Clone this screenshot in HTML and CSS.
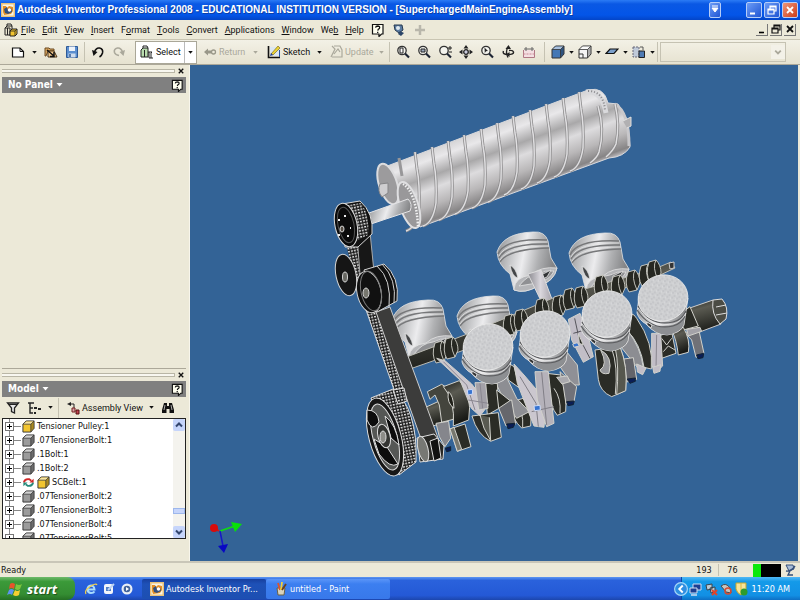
FILE: index.html
```html
<!DOCTYPE html>
<html lang="en">
<head>
	<meta charset="utf-8">
	<title>Autodesk Inventor Professional 2008</title>
	<link rel="stylesheet" href="styles.css">
</head>
<body>

	<!-- shared icons -->
	<svg class="defs" aria-hidden="true">
		<symbol id="cube" viewBox="0 0 14 14">
			<path d="M1 4.500L4.500 1H13V9L9.500 13H1Z" fill="currentColor" stroke="#333" stroke-width="1"/>
			<path d="M1.500 4.500L4.700 1.500H12.500L9.500 4.500Z" fill="#fff" opacity=".55"/>
			<path d="M9.500 4.500L12.500 1.500V9L9.500 12.500Z" fill="#000" opacity=".3"/>
			<path d="M1 4.500H9.500V13M9.500 4.500L13 1" fill="none" stroke="#333" stroke-width=".8"/>
		</symbol>
		<symbol id="lens" viewBox="0 0 14 14">
			<circle cx="6" cy="5.500" r="4.200" fill="#f4f4ee" stroke="#333" stroke-width="1.300"/>
			<path d="M9 8.500L13 12.500" stroke="#1d2433" stroke-width="2.200"/>
		</symbol>
		<symbol id="help" viewBox="0 0 14 14">
			<path d="M1.500 1.500H12V11H10.500L8 13.500V11H1.500Z" fill="#fffff0" stroke="#111" stroke-width="1.200"/>
			<path d="M4.600 4.700Q4.800 3 6.800 3Q8.800 3.100 8.700 4.800Q8.600 5.800 7.200 6.400L6.800 7.600M6.700 8.700V10" fill="none" stroke="#111" stroke-width="1.300"/>
		</symbol>
		<symbol id="assembly" viewBox="0 0 14 14">
			<path d="M1 5L3 3H8V12H1Z" fill="#e9e4cf" stroke="#222"/>
			<path d="M3 3V1H7L8 3M1 5H6V12M3.500 5V12" fill="none" stroke="#222"/>
			<path d="M6 8L8 6H13V11L11 13H6Z" fill="#f3c52e" stroke="#222"/>
			<path d="M6 8H11V13M11 8L13 6" fill="none" stroke="#222" stroke-width=".8"/>
		</symbol>
		<symbol id="app" viewBox="0 0 14 14">
			<path d="M0 0H14V14H0Z" fill="#e9c27a"/>
			<path d="M1.500 1.500H12.500V12.500H1.500Z" fill="#f8f4e6"/>
			<path d="M2 3H5L6 5L8 3L12 4V8L10 11L3 12L2 9Z" fill="#e58f22"/>
			<path d="M3 6L6 4L7 8L10 5L11 9L7 11L4 10Z" fill="#32507e"/>
			<circle cx="8.500" cy="7" r="1.700" fill="#fff"/>
		</symbol>
		<symbol id="arrow" viewBox="0 0 6 4"><path d="M0 0H6L3 3.500Z" fill="currentColor"/></symbol>
		<symbol id="close" viewBox="0 0 8 8"><path d="M1 1L7 7M7 1L1 7" stroke="currentColor" stroke-width="1.800"/></symbol>
		<symbol id="restore" viewBox="0 0 10 10"><path d="M3 5V1H9V6H7M3 2H9M1 4H7V9H1ZM1 5H7" fill="none" stroke="currentColor" stroke-width="1.200"/></symbol>
	</svg>

	<header class="titlebar">
		<svg class="icon"><use href="#app"/></svg>
		<h1>Autodesk Inventor Professional 2008 - EDUCATIONAL INSTITUTION VERSION - [SuperchargedMainEngineAssembly]</h1>
		<button class="cap pin" aria-label="Options"><svg viewBox="0 0 10 14"><path d="M2 3H8M2 5H8L5 9Z" fill="#fff" stroke="#fff"/></svg></button>
		<div class="caps">
			<button class="cap" aria-label="Minimize"><svg viewBox="0 0 14 14"><path d="M3 10.500H8" stroke="#fff" stroke-width="2"/></svg></button>
			<button class="cap restore" aria-label="Restore"><svg viewBox="-2 -2 14 14"><use href="#restore" width="10" height="10"/></svg></button>
			<button class="cap red" aria-label="Close"><svg viewBox="-3 -3 14 14"><use href="#close" width="8" height="8"/></svg></button>
		</div>
	</header>

	<nav class="menubar">
		<svg class="icon"><use href="#assembly"/></svg>
		<button><u>F</u>ile</button>
		<button><u>E</u>dit</button>
		<button><u>V</u>iew</button>
		<button><u>I</u>nsert</button>
		<button>F<u>o</u>rmat</button>
		<button><u>T</u>ools</button>
		<button><u>C</u>onvert</button>
		<button><u>A</u>pplications</button>
		<button><u>W</u>indow</button>
		<button>We<u>b</u></button>
		<button><u>H</u>elp</button>
		<span class="menu-icons">
			<button aria-label="Help topics"><svg class="icon"><use href="#help"/></svg></button>
			<button aria-label="Visual syllabus"><svg class="icon" viewBox="0 0 14 14"><path d="M2 2H10L11 7L7 10L3 7Z" fill="#5a7ba1" stroke="#26394f"/><circle cx="6" cy="5" r="2" fill="#dfe9ef"/><path d="M8 8L12 10L9 13L6 11Z" fill="#2c4668"/></svg></button>
			<button aria-label="Add"><svg class="icon" viewBox="0 0 14 14"><path d="M7 2V12M2 7H12" stroke="#b9b7ab" stroke-width="2.500"/></svg></button>
		</span>
		<span class="doc-caps">
			<button aria-label="Minimize document"><svg viewBox="0 0 10 10"><path d="M2 8.500H7" stroke="#000" stroke-width="1.600"/></svg></button>
			<button aria-label="Restore document"><svg viewBox="0 0 10 10"><use href="#restore"/></svg></button>
			<button aria-label="Close document"><svg viewBox="-1 -1 10 10"><use href="#close" width="8" height="8"/></svg></button>
		</span>
	</nav>

	<div class="toolbar">
		<button class="tool" aria-label="New"><svg class="icon" viewBox="0 0 14 14"><path d="M1.500 3H9L12.500 6.500V12H1.500Z" fill="#fff" stroke="#111" stroke-width="1.200"/><path d="M9 3V6.500H12.500" fill="none" stroke="#111"/></svg></button>
		<button class="drop" aria-label="New options"><svg><use href="#arrow"/></svg></button>
		<button class="tool" aria-label="Open"><svg class="icon" viewBox="0 0 14 14"><path d="M1 3H5L6 4H10V6H4L2 11H1Z" fill="#d9a55e" stroke="#6b4a22"/><path d="M4 6L10 6L13 12H4Z" fill="#f0c78b" stroke="#4a3418"/><path d="M3 5L10 11M10 7V11.500H6" fill="none" stroke="#111" stroke-width="1.500"/></svg></button>
		<button class="tool" aria-label="Save"><svg class="icon" viewBox="0 0 14 14"><path d="M1.500 1.500H12.500V12.500H1.500Z" fill="#5c8fd0" stroke="#2f5a96"/><path d="M4 1.500H10V6H4Z" fill="#eef3fa"/><path d="M3.500 8.500H10.500V12.500H3.500Z" fill="#cfdced"/><path d="M5 9V12" stroke="#2f5a96" stroke-width="1.500"/></svg></button>
		<i class="sep"></i>
		<button class="tool" aria-label="Undo"><svg class="icon" viewBox="0 0 14 14"><path d="M3.500 7Q5 2.500 8.500 3Q12.500 4 11.500 8Q10.800 10.500 8.500 12" fill="none" stroke="#111" stroke-width="1.600"/><path d="M1 5L6.500 7L2.500 11Z" fill="#111"/></svg></button>
		<button class="tool" aria-label="Redo"><svg class="icon" viewBox="0 0 14 14"><path d="M10.500 7Q9 2.500 5.500 3Q1.500 4 2.500 7.500Q3.500 10 7 10.500" fill="none" stroke="#aaa89b" stroke-width="1.600"/><path d="M13 5L7.500 7L11.500 11Z" fill="#aaa89b"/></svg></button>
		<span class="select-box">
			<button class="text-tool"><svg class="icon" viewBox="0 0 14 14"><path d="M1 5L3 3H8V12H1Z" fill="#b9dcae" stroke="#222"/><path d="M3 3V1H7L8 3M4.500 5V12" fill="none" stroke="#222"/><path d="M8 7H12L11 8V13M9 7V13H13" fill="none" stroke="#222"/></svg>Select</button>
			<button class="drop" aria-label="Select options"><svg><use href="#arrow"/></svg></button>
		</span>
		<button class="text-tool return" disabled><svg class="icon" viewBox="0 0 14 14"><path d="M1 7L5 3.500V5.500H8V8.500H5V10.500Z" fill="#999789"/><circle cx="10.500" cy="7" r="2" fill="none" stroke="#999789" stroke-width="1.300"/></svg>Return</button>
		<button class="drop" disabled aria-label="Return options"><svg><use href="#arrow"/></svg></button>
		<button class="text-tool sketch"><svg class="icon" viewBox="0 0 14 14"><path d="M3 2H12V11H3Z" fill="#dce7f2"/><path d="M1.500 1V12.500H13" fill="none" stroke="#111" stroke-width="1.600"/><path d="M4 9L11 1L13 3L6 10Z" fill="#ecd235" stroke="#6c5e10" stroke-width=".6"/><path d="M3 11L4 8L6 10Z" fill="#233e91"/><path d="M12.500 5V12" stroke="#2b55a3"/></svg>Sketch</button>
		<button class="drop" aria-label="Sketch options"><svg><use href="#arrow"/></svg></button>
		<button class="text-tool update" disabled><svg class="icon" viewBox="0 0 14 14"><path d="M3 1L6 4L2 12M5 1H11L13 5V12H3M5 9L9 4L11 7" fill="none" stroke="#aaa89b" stroke-width="1.200"/></svg>Update</button>
		<button class="drop" disabled aria-label="Update options"><svg><use href="#arrow"/></svg></button>
		<i class="sep"></i>
		<span class="views">
			<button class="tool" aria-label="Zoom all"><svg class="icon" viewBox="0 0 14 14"><use href="#lens"/><path d="M4 3H7V8H4Z" fill="#fff" stroke="#222"/></svg></button>
			<button class="tool" aria-label="Zoom window"><svg class="icon" viewBox="0 0 14 14"><use href="#lens"/><path d="M4 4H8V7H4Z" fill="#9aa7ba" stroke="#222"/></svg></button>
			<button class="tool" aria-label="Zoom"><svg class="icon" viewBox="0 0 14 14"><use href="#lens"/><path d="M10 3H14M12 1V5M10.500 7H14" stroke="#222"/></svg></button>
			<button class="tool" aria-label="Pan"><svg class="icon" viewBox="0 0 14 14"><path d="M7 0L9.500 3.500H4.500ZM7 14L9.500 10.500H4.500ZM0 7L3.500 4.500V9.500ZM14 7L10.500 4.500V9.500Z" fill="#222"/><circle cx="7" cy="7" r="2.300" fill="#ccd" stroke="#222" stroke-width="1.300"/></svg></button>
			<button class="tool" aria-label="Zoom selected"><svg class="icon" viewBox="0 0 14 14"><use href="#lens"/><path d="M4.500 2.500L8 6L6 6.200L4.800 8Z" fill="#222"/></svg></button>
			<button class="tool" aria-label="Rotate"><svg class="icon" viewBox="0 0 14 14"><path d="M7 2Q4 7 7 12.500M2.500 6Q1 9.500 7 9.500Q13 9.500 12.500 7Q12 5 8 5.500" fill="none" stroke="#222" stroke-width="1.400"/><path d="M4.500 4L7.500 0L10 4ZM5 9.500L8.500 7V12Z" fill="#222"/></svg></button>
			<button class="tool" aria-label="Look at"><svg class="icon" viewBox="0 0 14 14"><path d="M1.500 5V12.500H12.500V5" fill="#f4dfe2" stroke="#b07884"/><path d="M1.500 9H12.500" stroke="#c98a97" stroke-dasharray="2 1"/><path d="M2 4H12M4 2V6M10 2V6" stroke="#666"/></svg></button>
		</span>
		<i class="sep"></i>
		<span class="display">
			<button class="tool blue" aria-label="Shaded display"><svg class="icon"><use href="#cube"/></svg></button>
			<button class="drop" aria-label="Display options"><svg><use href="#arrow"/></svg></button>
			<button class="tool white" aria-label="Camera"><svg class="icon" viewBox="0 0 14 14"><use href="#cube"/><path d="M1 9H5V13" fill="none" stroke="#333"/></svg></button>
			<button class="drop" aria-label="Camera options"><svg><use href="#arrow"/></svg></button>
			<button class="tool" aria-label="Shadow"><svg class="icon" viewBox="0 0 14 14"><path d="M1 8.500L5 4H13L9 8.500Z" fill="#7b9fca" stroke="#111" stroke-width="1.200"/></svg></button>
			<button class="drop" aria-label="Shadow options"><svg><use href="#arrow"/></svg></button>
			<button class="tool" aria-label="Component opacity"><svg class="icon" viewBox="0 0 14 14"><path d="M1 2H7V12H1Z" fill="#bfc9d8" stroke="#667" stroke-dasharray="2 1"/><path d="M7 6H12.500V12.500H7Z" fill="#4f7bb3" stroke="#222"/><path d="M8 2H11V5" fill="none" stroke="#555"/></svg></button>
			<button class="drop" aria-label="Opacity options"><svg><use href="#arrow"/></svg></button>
		</span>
		<i class="sep"></i>
		<span class="style-pick"><select disabled aria-label="Style"><option></option></select><svg viewBox="0 0 10 8"><path d="M3 3L5 5L7 3" fill="none" stroke="#aaa89b" stroke-width="1.300"/></svg></span>
	</div>

	<main class="workspace">
		<aside class="sidebar">
			<section class="panel panel-top">
				<div class="grip"><i></i><button aria-label="Close panel"><svg><use href="#close"/></svg></button></div>
				<h2><button>No Panel <svg class="tri"><use href="#arrow"/></svg></button><button aria-label="Panel help"><svg class="icon"><use href="#help"/></svg></button></h2>
			</section>
			<section class="panel">
				<div class="grip"><i></i><button aria-label="Close browser"><svg><use href="#close"/></svg></button></div>
				<h2><button>Model <svg class="tri"><use href="#arrow"/></svg></button><button aria-label="Model help"><svg class="icon"><use href="#help"/></svg></button></h2>
				<div class="model-tools">
					<button class="tool" aria-label="Filter"><svg class="icon" viewBox="0 0 14 14"><path d="M1.500 2H12.500L8.500 7V12L5.500 10.500V7Z" fill="#e8e8e8" stroke="#222" stroke-width="1.300"/><path d="M3 3.500H11" stroke="#222"/></svg></button>
					<button class="tool" aria-label="Tree display"><svg class="icon" viewBox="0 0 14 14"><path d="M1 2H7M3 2V12H6M3 7H6" fill="none" stroke="#222" stroke-width="1.400"/><path d="M7 7H10M7 12H9M11 8H14" stroke="#222" stroke-width="2"/></svg></button>
					<button class="drop" aria-label="Tree options"><svg><use href="#arrow"/></svg></button>
					<i class="sep"></i>
					<button class="text-tool view"><svg class="icon" viewBox="0 0 14 14"><path d="M1 3L5 1V5Z" fill="#222"/><path d="M5 3H8V7" fill="none" stroke="#222"/><path d="M6 7H9V11H6Z" fill="#d9a0a8" stroke="#722"/><path d="M10 9H13V13H10Z" fill="#bf4351" stroke="#511"/></svg>Assembly View</button>
					<button class="drop" aria-label="View options"><svg><use href="#arrow"/></svg></button>
					<button class="tool" aria-label="Find"><svg class="icon" viewBox="0 0 14 14"><path d="M3 2H6V5H8V2H11L13 9V12H8.500V8H5.500V12H1V9Z" fill="#111"/><path d="M4 4L3 9M10 4L11 9" stroke="#aaa"/></svg></button>
				</div>
				<div class="tree-box">
					<ul class="tree">
						<li><button class="plus" aria-label="Expand"></button><svg class="part yellow"><use href="#cube"/></svg>Tensioner Pulley:1</li>
						<li><button class="plus" aria-label="Expand"></button><svg class="part"><use href="#cube"/></svg>.07TensionerBolt:1</li>
						<li><button class="plus" aria-label="Expand"></button><svg class="part"><use href="#cube"/></svg>.1Bolt:1</li>
						<li><button class="plus" aria-label="Expand"></button><svg class="part"><use href="#cube"/></svg>.1Bolt:2</li>
						<li><button class="plus" aria-label="Expand"></button><svg class="part" viewBox="0 0 14 14"><path d="M2 7Q3 2.500 8 3.500L10 5" fill="none" stroke="#d02828" stroke-width="2"/><path d="M12 7Q11 11.500 6 10.500L4 9" fill="none" stroke="#268a7c" stroke-width="2"/><path d="M12.500 3V7H8Z" fill="#d02828"/><path d="M1.500 11V7H6Z" fill="#268a7c"/></svg><svg class="part yellow"><use href="#cube"/></svg>SCBelt:1</li>
						<li><button class="plus" aria-label="Expand"></button><svg class="part"><use href="#cube"/></svg>.07TensionerBolt:2</li>
						<li><button class="plus" aria-label="Expand"></button><svg class="part"><use href="#cube"/></svg>.07TensionerBolt:3</li>
						<li><button class="plus" aria-label="Expand"></button><svg class="part"><use href="#cube"/></svg>.07TensionerBolt:4</li>
						<li><button class="plus" aria-label="Expand"></button><svg class="part"><use href="#cube"/></svg>.07TensionerBolt:5</li>
					</ul>
					<div class="scroll">
						<button aria-label="Scroll up"><svg viewBox="0 0 10 10"><path d="M2 6.500L5 3.500L8 6.500" fill="none" stroke="#33466e" stroke-width="2"/></svg></button>
						<i class="thumb"></i>
						<button aria-label="Scroll down"><svg viewBox="0 0 10 10"><path d="M2 3.500L5 6.500L8 3.500" fill="none" stroke="#33466e" stroke-width="2"/></svg></button>
					</div>
				</div>
			</section>
		</aside>

		<div class="viewport">
			<svg viewBox="190 65 608 496" role="img" aria-label="Supercharged main engine assembly">
				<defs>
					<linearGradient id="rotor" gradientUnits="userSpaceOnUse" x1="482" y1="124" x2="512" y2="205">
						<stop offset="0" stop-color="#c9c8c9"/><stop offset=".18" stop-color="#e9e8ea"/><stop offset=".36" stop-color="#a9a8a9"/><stop offset=".5" stop-color="#dddcde"/><stop offset=".68" stop-color="#b9b7b8"/><stop offset=".84" stop-color="#868485"/><stop offset=".93" stop-color="#e4e0e4"/><stop offset="1" stop-color="#aaa"/>
					</linearGradient>
					<linearGradient id="steel" x1="0" x2="1" y1="0" y2=".2">
						<stop offset="0" stop-color="#8c8d8f"/><stop offset=".3" stop-color="#c6c7c9"/><stop offset=".5" stop-color="#ececee"/><stop offset=".75" stop-color="#b0b1b3"/><stop offset="1" stop-color="#848587"/>
					</linearGradient>
					<linearGradient id="iron" x1="0" x2=".3" y1="0" y2="1">
						<stop offset="0" stop-color="#1b1c18"/><stop offset=".35" stop-color="#5b5b52"/><stop offset="1" stop-color="#191a16"/>
					</linearGradient>
					<linearGradient id="rod" x1="0" x2="1" y1="0" y2="0">
						<stop offset="0" stop-color="#8b8a90"/><stop offset=".5" stop-color="#dad7dd"/><stop offset="1" stop-color="#a19da5"/>
					</linearGradient>
					<pattern id="teeth" width="3" height="3" patternUnits="userSpaceOnUse" patternTransform="rotate(-12)">
						<path d="M0 0H3V3H0Z" fill="#1b1b1b"/><path d="M0 0H2V1.500H0Z" fill="#ddd"/>
					</pattern>
					<pattern id="speck" width="5" height="5" patternUnits="userSpaceOnUse" patternTransform="rotate(25)">
						<path d="M0 0H5V5H0Z" fill="#cfd0d2"/><path d="M0 1H2M3 3H5" stroke="#bcbdc0"/><path d="M2 4H3" stroke="#dfe0e2"/>
					</pattern>
					<path id="fin" d="M0 0L2 17Q5 32 4 56Q1 76-9 79" fill="none"/>
					<g id="blade"><use href="#fin" stroke="#8c8b8c" stroke-width="3"/><use href="#fin" stroke="#dfdee0" stroke-width="1.500"/></g>

					<!-- piston seen from the side, rings on top -->
					<g id="piston-side" stroke="#e4e4e4" stroke-width=".8">
						<path d="M-30-9Q-24-28 6-29Q18-30 21-20L24-3L30 7Q27 21 11 25Q-2 33-13 29L-17 13Q-29 4-30-9Z" fill="url(#steel)"/>
						<path d="M-29-7Q-22-23 20-21M-28-3Q-20-18 21-17M-27 1Q-19-12 22-13" fill="none" stroke="#77787a" stroke-width="1.400"/>
						<path d="M-28-5Q-21-20 20-19M-27-1Q-19-15 22-15" fill="none"/>
						<path d="M-17 4Q-11 7-9 17Q-15 16-17 4Z" fill="#444648"/>
						<path d="M-13 28Q-12 16 4 14Q14 5 30 7Q27 21 11 25Q-2 33-13 29Z" fill="#b5b6b9"/>
						<path d="M-8 25Q0 14 11 13Q18 9 27 10Q23 19 10 22Z" fill="#8f9093"/>
						<path d="M14 14L24 9L20 16L13 19Z" fill="#333537"/>
					</g>
					<!-- piston seen from above, crown facing the viewer -->
					<g id="piston-top" stroke="#ececec" stroke-width=".8">
						<path d="M-24-2L-26 15Q-24 22-17 26Q-9 36 4 37Q18 35 21 27L25 0Z" fill="url(#steel)"/>
						<path d="M-17 25Q-4 31 10 27Q19 24 22 17L20 27Q14 36 4 37Q-9 36-17 25Z" fill="#8d8f92" stroke="none"/>
						<path d="M-25 8Q-13 29 10 24Q19 22 23 13M-26 12Q-12 33 10 28Q18 26 22 18" fill="none" stroke="#5b5c5f" stroke-width="1.200"/>
						<path d="M-25 10Q-12 31 10 26Q18 24 23 15" fill="none"/>
						<ellipse cx="0" cy="0" rx="25" ry="23" transform="rotate(-15)" fill="url(#speck)"/>
						<path d="M-16 24L-11 27L-12 30L-16 27Z" fill="#333"/>
					</g>
					<!-- camshaft lobe -->
					<g id="lobe" stroke="#d0d0c8" stroke-width=".9">
						<path d="M-4-9L3-11Q8-6 8 2L5 9L-3 11Q-8 3-4-9Z" fill="#272822"/>
						<path d="M3-11Q-1-4 5 9" fill="none"/>
					</g>
				</defs>

				<!-- supercharger rotors -->
				<g class="rotors">
					<path d="M382 168L588 90Q604 86 608 103L618 104L628 121L630 147Q624 157 609 158L420 227L397 205Z" fill="url(#rotor)" stroke="#d9d9dc"/>
					<path d="M586 92Q602 90 606 113" fill="none" stroke="#d9d9dc" stroke-width="5"/>
					<path d="M588 91Q604 91 605 111" fill="none" stroke="#858589" stroke-dasharray="1 2" stroke-width="2"/>
					<path d="M615 104Q629 112 629 146" fill="none" stroke="#c9c8cb" stroke-width="3"/>
					<path d="M623 121L631 117V126L627 128" fill="#b1b0b2" stroke="#e0e0e0"/>
					<use href="#blade" x="415" y="152"/>
					<use href="#blade" x="432" y="147"/>
					<use href="#blade" x="448" y="141"/>
					<use href="#blade" x="464" y="135"/>
					<use href="#blade" x="481" y="129"/>
					<use href="#blade" x="497" y="123"/>
					<use href="#blade" x="513" y="116"/>
					<use href="#blade" x="530" y="110"/>
					<use href="#blade" x="546" y="104"/>
					<use href="#blade" x="563" y="98"/>
					<use href="#blade" x="579" y="92"/>
					<path d="M598 106Q605 130 599 152Q597 158 590 163M615 104Q620 125 616 144Q613 151 606 157" fill="none" stroke="#8c8b8c" stroke-width="3"/>
					<path d="M598 106Q605 130 599 152Q597 158 590 163M615 104Q620 125 616 144Q613 151 606 157" fill="none" stroke="#dfdee0" stroke-width="1.500"/>
					<path d="M399 158L402 176" stroke="#989799" stroke-width="3"/>
					<ellipse cx="388" cy="184" rx="9" ry="21" transform="rotate(-18 388 184)" fill="#9c9b9d" stroke="#dcdcde" stroke-width="2"/>
					<path d="M380 184L388 183V193L382 197Q377 191 380 184Z" fill="#cfced0" stroke="#858587"/>
					<ellipse cx="409" cy="205" rx="9" ry="24" transform="rotate(-18 409 205)" fill="#99989a" stroke="#dfdfe1" stroke-width="2"/>
					<path d="M403 184Q416 192 418 226" fill="none" stroke="#f1f1f1" stroke-width="2.500" stroke-dasharray="1.500 1.500"/>
					<path d="M369 213L408 199Q413 204 410 211L371 224Z" fill="url(#steel)" stroke="#e4e4e6"/>
				</g>

				<!-- rear pistons and camshaft -->
				<use href="#piston-side" x="422" y="329"/>
				<use href="#piston-side" x="487" y="325"/>
				<use href="#piston-side" x="527" y="261"/>
				<use href="#piston-side" x="599" y="262"/>
				<path d="M528 274L541 270L553 302L543 305Z" fill="url(#rod)" stroke="#ddd"/>
				<path d="M404 358L470 333L553 298L652 270L671 262L675 268L656 277L556 312L470 348L407 370Z" fill="url(#iron)" stroke="#b9b9b2"/>
				<use href="#lobe" x="439" y="352"/><use href="#lobe" x="450" y="348"/>
				<use href="#lobe" x="509" y="325"/><use href="#lobe" x="520" y="320"/>
				<use href="#lobe" x="541" y="309"/><use href="#lobe" x="558" y="306"/>
				<use href="#lobe" x="569" y="299"/><use href="#lobe" x="580" y="297"/>
				<use href="#lobe" x="600" y="286"/><use href="#lobe" x="617" y="286"/>
				<use href="#lobe" x="632" y="281"/><use href="#lobe" x="645" y="275"/><use href="#lobe" x="653" y="271"/>
				<path d="M669 263L674 262V268L670 269Z" fill="#333" stroke="#ccc"/>

				<!-- crankshaft, rear half -->
				<path d="M681 311L713 300L721 324L689 336Z" fill="url(#iron)" stroke="#ccc"/>
				<path d="M713 300L722 299Q729 307 726 319L720 324Q711 314 713 300Z" fill="#4b4c44" stroke="#ddd"/>
				<path d="M716 307L726 305M716 315L727 313" stroke="#ddd"/>
				<g transform="translate(540 290) scale(.3333)" stroke="#d2d2cc" stroke-width="3" fill="#2b2c26">
					<path d="M415 75L450 50L475 108L430 120Z"/>
					<path d="M435 128L475 113L492 190L468 202L455 150Z" fill="#707177"/>
					<path d="M440 118L480 112L485 124L445 138Z" fill="#a3a2a8"/>
					<path d="M395 120L430 112Q452 150 445 187L415 195Q410 150 395 120Z" fill="url(#iron)"/>
					<path d="M355 138L395 125L408 190L365 205Z"/>
					<path d="M365 145L380 165L395 145M370 185L385 168L405 180" fill="none"/>
					<path d="M335 130L362 130L368 228L348 247L335 225Z" fill="#c2bec7"/>
					<path d="M350 135L348 240" stroke="#8a8790"/>
					<path d="M250 75Q275 60 290 85Q342 160 334 237L312 232Q302 160 260 120Z"/>
					<path d="M230 155L262 120Q304 175 310 234L292 232Z" fill="#8c8d92"/>
					<path d="M290 222L318 234L308 254L292 246ZM338 232L362 224L360 244L342 250Z" fill="#c2bec7"/>
					<path d="M245 208L280 203L290 268L262 276Z" fill="#63646a"/>
					<path d="M165 180L240 170Q264 230 257 302L215 320Q180 305 175 268Z"/>
					<path d="M215 175Q235 230 226 312" fill="none"/>
					<path d="M182 180Q220 200 207 250Q185 255 180 240Q205 225 182 180Z" fill="#96979a"/>
					<path d="M226 175L240 170Q264 230 257 302L230 314Q238 230 226 175Z" fill="#56574e"/>
					<path d="M85 88L120 70L145 140L160 200L130 217L95 150Z" fill="#c2bec7"/>
					<path d="M104 85L116 140L150 205M100 130L135 120" fill="none" stroke="#55545a"/>
					<path d="M115 130L130 165L118 160Z"/>
					<path d="M80 185L112 225L118 285L98 285L60 230Z" fill="#8f9096"/>
					<path d="M262 267L286 264L286 274L270 280ZM470 195L491 190L489 203L474 206Z" fill="#0a1e56" stroke="#123"/>
					<path d="M98 162L112 158L118 168L102 172Z" fill="#3773d0"/>
				</g>

				<!-- crankshaft, front half -->
				<g transform="translate(400 340) scale(.3333)" stroke="#d2d2cc" stroke-width="3" fill="#2b2c26">
					<path d="M440 100L482 105Q502 165 497 215L472 226Q450 200 448 150Z"/>
					<path d="M462 145Q484 175 480 220" fill="none"/>
					<path d="M480 95L530 140L522 186L498 192L490 140Z" fill="#717279"/>
					<path d="M470 112L502 108L510 125L486 132Z" fill="#aaa9ae"/>
					<path d="M318 65L342 80L360 145L325 120Z"/>
					<path d="M318 190L370 175Q398 215 392 258L365 264Q338 240 330 200Z"/>
					<path d="M346 184Q372 215 368 262" fill="none"/>
					<path d="M285 125L318 108L350 175L388 215L350 235L315 185Z" fill="#8d8e93"/>
					<path d="M290 190L335 180L347 252L318 258Z" fill="#66676c"/>
					<path d="M255 130L292 130L297 205L262 225Z"/>
					<path d="M216 228L295 218L304 292L272 304Q232 285 216 228Z"/>
					<path d="M240 225Q248 265 272 302L268 232" fill="#595a51"/>
					<path d="M290 150L330 182L296 205Z"/>
					<path d="M70 205L125 180L145 240L90 262Z" fill="url(#iron)"/>
					<path d="M82 155L125 133L152 150L166 200L160 238L125 247L118 195L105 165L90 178Z" fill="#44453d"/>
					<path d="M130 140L178 122Q218 160 206 240L160 258Q166 180 130 140Z" fill="url(#iron)"/>
					<path d="M145 155Q160 165 162 205Q140 190 145 155Z" fill="#202019"/>
					<path d="M108 250L146 244L152 295L135 320L118 290Z" fill="#85868c"/>
					<path d="M150 267L195 252L213 320L172 334Z"/>
					<path d="M150 267L162 262L185 328L172 334Z" fill="#77786f"/>
					<path d="M110 55L135 62L215 132L265 195L240 228L214 205L180 120Z" fill="#cbc7cf"/>
					<path d="M225 128L257 128L264 205L236 210Z" fill="#a3a1a8"/>
					<path d="M130 65L200 135L225 210M240 130L248 205M205 180L265 190" fill="none" stroke="#8a8790"/>
					<path d="M342 72L372 105L440 185L432 262L402 258L352 130Z" fill="#cbc7cf"/>
					<path d="M405 95L445 95L462 250L440 260L412 180Z" fill="#b5b2ba"/>
					<path d="M360 110L408 190L415 260M425 97L440 255M395 215L462 200" fill="none" stroke="#817e87"/>
					<path d="M320 252L345 250L340 262L324 266ZM500 185L523 183L520 194L504 197ZM136 325L152 320V332L140 335Z" fill="#0a1e56" stroke="#123"/>
					<path d="M202 150L217 148L218 162L204 165ZM402 198L420 196L421 210L404 212Z" fill="#3773d0" stroke="#cfdcf6"/>
				</g>

				<!-- front pistons -->
				<use href="#piston-top" x="488" y="347"/>
				<use href="#piston-top" x="545" y="334"/>
				<use href="#piston-top" x="607" y="314"/>
				<use href="#piston-top" x="663" y="298"/>

				<!-- belt drive -->
				<path d="M365 307L377 303L408 397L398 401Z" fill="url(#teeth)" stroke="#ddd"/>
				<path d="M376 312L390 307L441 446L427 456Z" fill="#3c3c3b" stroke="#ccc"/>
				<path d="M347 248L361 240L372 281L356 285Z" fill="url(#teeth)"/>
				<path d="M357 236L370 232L374 272L360 274Z" fill="#171717" stroke="#aaa"/>
				<g stroke="#d8d8d8">
					<path d="M342 204L360 201Q374 213 372 234L358 247L345 247Z" fill="#111"/>
					<path d="M348 205L361 203Q370 215 368 235L356 241Z" fill="url(#teeth)" stroke="none"/>
					<ellipse cx="346" cy="225" rx="11" ry="22" transform="rotate(-12 346 225)" fill="#0b0b0b"/>
					<ellipse cx="346" cy="225" rx="8" ry="18" transform="rotate(-12 346 225)" fill="none" stroke="#555"/>
					<ellipse cx="342" cy="229" rx="2" ry="3" fill="#554d43"/>
				</g>
				<path d="M338 220H340M344 216H346M347 236H349M338 235H340M350 228H351" stroke="#eee" stroke-width="2"/>
				<g stroke="#d4d4d4">
					<ellipse cx="346" cy="275" rx="10" ry="21" transform="rotate(-12 346 275)" fill="#151515"/>
					<ellipse cx="345" cy="277" rx="2.500" ry="5" fill="#686862"/>
					<path d="M364 270L384 264Q400 277 397 301L377 312Z" fill="#111"/>
					<path d="M377 266Q392 279 389 307M382 264Q397 279 394 303" fill="none"/>
					<ellipse cx="369" cy="292" rx="12" ry="21" transform="rotate(-12 369 292)" fill="#111"/>
					<ellipse cx="371" cy="291" rx="10" ry="20" transform="rotate(-12 371 291)" fill="none" stroke="#777"/>
					<ellipse cx="366" cy="293" rx="3" ry="5" fill="#77776f"/>
				</g>
				<g stroke="#dedede">
					<path d="M371 398L393 389Q418 409 416 462L399 475Z" fill="url(#teeth)"/>
					<path d="M393 390L404 388L407 401L398 404Z" fill="url(#teeth)"/>
					<ellipse cx="385" cy="437" rx="16" ry="40" transform="rotate(-15 385 437)" fill="#171717"/>
					<ellipse cx="385" cy="437" rx="12" ry="34" transform="rotate(-15 385 437)" fill="#555755"/>
					<path d="M367 410Q378 410 379 422Q372 433 367 420ZM374 439L387 447L398 464Q390 469 379 454ZM385 416Q396 424 399 445L391 438Z" fill="#0c0c0c"/>
					<ellipse cx="384" cy="436" rx="6" ry="12" transform="rotate(-15 384 436)" fill="#343533"/>
					<ellipse cx="383" cy="437" rx="3" ry="6" fill="#8c8c88"/>
					<path d="M417 438L434 434L444 446L443 459L420 462Z" fill="#272724"/>
					<path d="M430 441L438 438L441 458L434 461Z" fill="#111"/>
					<ellipse cx="423" cy="449" rx="5" ry="13" transform="rotate(-14 423 449)" fill="#777874"/>
				</g>

				<!-- axis triad -->
				<path d="M220 531L235 526" stroke="#0fdd0f" stroke-width="1.500"/><path d="M231 522L242 524L235 532Z" fill="#08e208"/>
				<path d="M220 531L223 546" stroke="#1717c8" stroke-width="1.500"/><path d="M218 546L228 544L224 553Z" fill="#0808c4"/>
				<path d="M219 531L214 528" stroke="#d81717" stroke-width="2"/><circle cx="214" cy="528" r="4" fill="#d80c0c"/>
			</svg>
		</div>
	</main>

	<footer class="status">
		<span class="ready">Ready</span><span class="count">193</span><span class="count second">76</span>
		<i class="memory"></i>
		<svg class="icon" viewBox="0 0 14 14"><path d="M3 2H10L11 6L6 8Z" fill="#a8bdd8" stroke="#35507a"/><path d="M12 3Q8 9 3 8M7 8L5 12H10" fill="none" stroke="#35507a" stroke-width="1.400"/></svg>
	</footer>

	<div class="taskbar">
		<button class="start"><svg viewBox="0 0 16 16"><path d="M3 3Q5 1 8 3L7 8Q4 6 2 8Z" fill="#e9542b"/><path d="M9 3Q12 5 15 3L13 8Q11 10 8 8Z" fill="#7fc63d"/><path d="M2 9Q4 7 7 9L5 14Q3 12 0 14Z" fill="#5d93f0"/><path d="M8 9Q10 11 13 9L12 14Q9 16 6 14Z" fill="#f6cf32"/></svg>start</button>
		<div class="quick">
			<button aria-label="Internet Explorer"><svg class="icon" viewBox="0 0 14 14"><path d="M3.500 7.500H10.500Q10 3.500 7 3.500Q3.500 4 3.500 7.500Q4 11 7 11Q9.500 11 10.500 9.500" fill="none" stroke="#a8dcff" stroke-width="2"/><path d="M2 12Q0 8 7 4Q12 1 13 3" fill="none" stroke="#f4cf49" stroke-width="1.200"/></svg></button>
			<button aria-label="Show desktop"><svg class="icon" viewBox="0 0 14 14"><rect x="2" y="2" width="9" height="10" rx="2" fill="#f2f5fb"/><path d="M4 5H9V9H4Z" fill="#527fc7"/><path d="M6 8L12 2" stroke="#bbd2f2" stroke-width="2"/></svg></button>
			<button aria-label="Media player"><svg class="icon" viewBox="0 0 14 14"><circle cx="7" cy="7" r="5.500" fill="#e8eef6"/><circle cx="7" cy="7" r="3.300" fill="#42639b"/><path d="M6 5L9 7L6 9Z" fill="#fff"/></svg></button>
		</div>
		<button class="task active"><svg class="icon"><use href="#app"/></svg>Autodesk Inventor Pr...</button>
		<button class="task"><svg class="icon" viewBox="0 0 14 14"><path d="M3 6H11L10 13H4Z" fill="#d8d2bd" stroke="#6a6045"/><path d="M4 1L6 8" stroke="#e0542a" stroke-width="1.800"/><path d="M8 0L7 8" stroke="#f2cf3b" stroke-width="1.800"/><path d="M12 2L8 8" stroke="#6b3f1b" stroke-width="1.800"/></svg>untitled - Paint</button>
		<div class="tray">
			<button class="more" aria-label="Show hidden icons"><svg viewBox="0 0 12 12"><circle cx="6" cy="6" r="5.500" fill="#2f8fe2" stroke="#a5d6f7"/><path d="M7.500 3L4.500 6L7.500 9" fill="none" stroke="#fff" stroke-width="1.600"/></svg></button>
			<svg class="icon" viewBox="0 0 14 14"><path d="M4 2H12V8H4Z" fill="#1c3f92" stroke="#d2dcef"/><path d="M1 6H8V11H1Z" fill="#1c3f92" stroke="#d2dcef"/><path d="M2 13H8" stroke="#d2dcef" stroke-width="1.500"/></svg>
			<svg class="icon" viewBox="0 0 14 14"><path d="M2 3L8 2V7L3 8ZM6 6L11 5V10L7 11Z" fill="#bccbd5" stroke="#39444d"/><path d="M8 8L13 13M13 8L8 13" stroke="#e0432a" stroke-width="2"/></svg>
			<svg class="icon" viewBox="0 0 14 14"><path d="M2 4Q7 0 11 6L12 11L7 10Z" fill="#c8c4bd" stroke="#4b4b4b"/><circle cx="9" cy="9" r="3" fill="none" stroke="#d54b31" stroke-width="1.500"/></svg>
			<svg class="icon" viewBox="0 0 14 14"><path d="M2 1H12V7Q11 11 7 13Q3 11 2 7Z" fill="#f5e49a" stroke="#c3a62d"/><path d="M7 1V12" stroke="#d8b93c"/><circle cx="10" cy="10" r="3.500" fill="#2d9c2d"/></svg>
			<time>11:20 AM</time>
		</div>
	</div>

</body>
</html>
```

FILE: styles.css
```css
* {
	box-sizing: border-box;
}
body {
	margin: 0;
	height: 100vh;
	display: flex;
	flex-direction: column;
	overflow: hidden;
	background: #ece9d8;
	color: #111;
	font-family: "DejaVu Sans Condensed", "DejaVu Sans", sans-serif;
	font-size: 9px;
	line-height: 12px;
}
button {
	display: flex;
	align-items: center;
	flex: none;
	margin: 0;
	padding: 0;
	border: 0;
	background: none;
	color: inherit;
	font: inherit;
	white-space: nowrap;
}
button:disabled {
	color: #aaa89b;
}
svg {
	display: block;
	flex: none;
}
.defs {
	position: absolute;
	width: 0;
	height: 0;
}
.icon {
	width: 14px;
	height: 14px;
}

/* title bar */
.titlebar {
	display: flex;
	align-items: center;
	height: 20px;
	padding: 0 2px 0 1px;
	gap: 2px;
	flex: none;
	color: #fff;
	background: linear-gradient(#2b7bf5, #0a58e4 20%, #0355e8 75%, #0345c8);
}
.titlebar h1 {
	flex: 1;
	min-width: 0;
	margin: 0;
	overflow: hidden;
	white-space: nowrap;
	font-family: "Liberation Sans", Arial, sans-serif;
	font-size: 10px;
	font-weight: bold;
	text-shadow: 1px 1px #0a3fa8;
}
.cap {
	width: 16px;
	height: 16px;
	justify-content: center;
	border: 1px solid #b5cdf8;
	border-radius: 2px;
	background: linear-gradient(135deg, #6c9cf6, #2056d4);
}
.cap svg {
	width: 14px;
	height: 14px;
}
.pin {
	width: 12px;
	margin-right: 23px;
}
.pin svg {
	width: 10px;
}
.caps {
	display: flex;
	gap: 2px;
}
.red {
	background: linear-gradient(135deg, #ef9579, #cc3c18);
}

/* menu */
.menubar,
.toolbar,
.model-tools {
	font-family: Roboto, "Liberation Sans", sans-serif;
}
.menubar {
	display: flex;
	align-items: center;
	gap: 7px;
	height: 20px;
	flex: none;
	padding: 0 4px;
	border-bottom: 1px solid #c9c5b2;
}
.menubar > .icon {
	margin-right: -4px;
}
.menu-icons {
	display: flex;
	gap: 7px;
}
.doc-caps {
	display: flex;
	margin-left: auto;
	gap: 2px;
}
.doc-caps button {
	width: 12px;
	height: 12px;
	justify-content: center;
	border-right: 1px solid #777;
	border-bottom: 1px solid #777;
}
.doc-caps svg {
	width: 10px;
	height: 10px;
}

/* toolbar */
.toolbar {
	display: flex;
	align-items: center;
	height: 25px;
	flex: none;
	padding: 0 4px 0 7px;
	border-bottom: 1px solid #aca899;
	background: linear-gradient(#f3f1e6, #e6e2d0);
}
.tool {
	width: 21px;
	height: 20px;
	justify-content: center;
}
.blue {
	color: #4377b5;
}
.white {
	color: #f4f4f4;
}
.drop {
	width: 12px;
	height: 20px;
	justify-content: center;
}
.drop svg {
	width: 5px;
	height: 3px;
}
.sep {
	width: 1px;
	height: 20px;
	margin: 0 2px;
	flex: none;
	background: #c5c2b2;
}
.views {
	display: flex;
	flex: none;
	margin-right: 3px;
}
.display {
	display: flex;
	flex: none;
}
.display .drop {
	width: 6px;
}
.text-tool {
	gap: 2px;
	height: 20px;
}
.select-box {
	display: flex;
	align-items: center;
	width: 62px;
	height: 23px;
	margin-left: 6px;
	padding-left: 4px;
	flex: none;
	border: 1px solid #aaa798;
	background: #fff;
}
.select-box .text-tool {
	flex: 1;
}
.select-box .drop {
	height: 21px;
	border-left: 1px solid #bbb;
}
.return,
.sketch,
.update {
	width: 46px;
	margin-left: 6px;
}
.update {
	margin-left: 4px;
}
.style-pick {
	display: flex;
	align-items: center;
	flex: 1;
	height: 20px;
	margin-right: 10px;
	border: 1px solid #c5c2b2;
}
.style-pick select {
	flex: 1;
	height: 18px;
	min-width: 0;
	border: 0;
	appearance: none;
	background: transparent;
}
.style-pick svg {
	width: 14px;
	height: 14px;
	background: #f3f1e8;
}

/* side panels */
.workspace {
	display: flex;
	flex: 1;
	min-height: 0;
}
.sidebar {
	display: flex;
	flex-direction: column;
	width: 190px;
	flex: none;
	padding: 0 3px 0 2px;
	border-right: 1px solid #f8f6ec;
}
.panel-top {
	flex: 1;
	border-bottom: 1px solid #aca899;
}
.grip {
	display: flex;
	align-items: center;
	gap: 3px;
	height: 12px;
}
.grip i {
	flex: 1;
	height: 4px;
	border: 1px solid #b9b6a6;
	border-left: 0;
	background: #f8f7f0;
}
.grip svg {
	width: 6px;
	height: 6px;
	margin-right: 2px;
}
.panel h2 {
	display: flex;
	align-items: center;
	justify-content: space-between;
	height: 16px;
	margin: 0;
	padding: 0 2px 0 6px;
	background: #808080;
	color: #fff;
	font-size: 10px;
	font-weight: bold;
}
.panel h2 .icon {
	width: 13px;
	height: 13px;
}
.tri {
	width: 7px;
	height: 4px;
	margin-left: 3px;
}
.model-tools {
	display: flex;
	align-items: center;
	height: 21px;
}
.view {
	margin: 0 2px 0 5px;
}
.tree-box {
	display: flex;
	height: 121px;
	margin-bottom: 22px;
	border: 1px solid #222;
	background: #fff;
}
.tree {
	flex: 1;
	margin: 0;
	padding: 0 0 0 2px;
	overflow: hidden;
	list-style: none;
}
.tree li {
	display: flex;
	align-items: center;
	gap: 2px;
	height: 14px;
	white-space: nowrap;
	/* trunk line behind the expanders */
	background: linear-gradient(#888, #888) 4px 0 / 1px 14px no-repeat, linear-gradient(#888, #888) 4px 7px / 12px 1px no-repeat;
}
.plus {
	width: 9px;
	height: 9px;
	margin-right: 6px;
	border: 1px solid #777;
	background: linear-gradient(#000, #000) center / 5px 1px no-repeat, linear-gradient(#000, #000) center / 1px 5px no-repeat, #fff;
}
.part {
	width: 13px;
	height: 13px;
	color: #9b9b9b;
}
.yellow {
	color: #f2c530;
}
.scroll {
	display: flex;
	flex-direction: column;
	width: 12px;
	background: #f4f3ee;
}
.scroll button {
	width: 12px;
	height: 12px;
	justify-content: center;
	border-radius: 2px;
	background: #c6d5fb;
}
.scroll svg {
	width: 10px;
	height: 10px;
}
.thumb {
	height: 6px;
	margin: auto 0 12px;
	border: 1px solid #9db7ec;
	background: #c6d5fb;
}
.viewport {
	flex: 1;
	min-width: 0;
	margin-right: 2px;
	background: #336396;
}
.viewport svg {
	width: 100%;
	height: 100%;
}

/* status */
.status {
	display: flex;
	align-items: center;
	height: 16px;
	flex: none;
	padding: 0 3px 0 1px;
	border-top: 2px solid #c9c6b8;
}
.ready {
	flex: 1;
}
.count {
	width: 28px;
	text-align: center;
}
.second {
	border-left: 1px solid #c5c2b2;
}
.memory {
	width: 28px;
	height: 13px;
	margin: 0 2px 0 7px;
	background: linear-gradient(90deg, #0be80b 8px, #000 8px);
}

/* taskbar */
.taskbar {
	display: flex;
	height: 23px;
	flex: none;
	color: #fff;
	background: linear-gradient(#5d97f2, #2a62dc 15%, #2459d6 80%, #1c46ad);
}
.start {
	width: 75px;
	gap: 4px;
	padding-left: 7px;
	border-radius: 0 8px 8px 0;
	background: linear-gradient(#6fba6b, #3b9a39 20%, #348d32 75%, #256f24);
	font-family: "Open Sans", sans-serif;
	font-size: 13px;
	font-weight: bold;
	font-style: italic;
	text-shadow: 1px 1px 1px #1c501b;
}
.start svg {
	width: 16px;
	height: 16px;
}
.quick {
	display: flex;
	gap: 4px;
	padding: 0 8px 0 9px;
}
.task {
	width: 124px;
	margin: 2px 0 1px;
	gap: 2px;
	padding-left: 8px;
	border-radius: 2px;
	background: linear-gradient(#5b95f8, #3c7ff0 25%, #3878ea);
	overflow: hidden;
}
.active {
	background: linear-gradient(#173f9e, #1e51b7 25%, #1d4fb2);
}
.tray {
	display: flex;
	align-items: center;
	gap: 1px;
	margin-left: auto;
	padding-right: 10px;
	border-left: 1px solid #0d4aa3;
	background: linear-gradient(#52b8f4, #149ae9 20%, #1290e4 80%, #0e6fc4);
}
.more {
	margin-left: -8px;
}
.more svg {
	width: 14px;
	height: 14px;
}
.tray time {
	margin-left: 3px;
}
```
